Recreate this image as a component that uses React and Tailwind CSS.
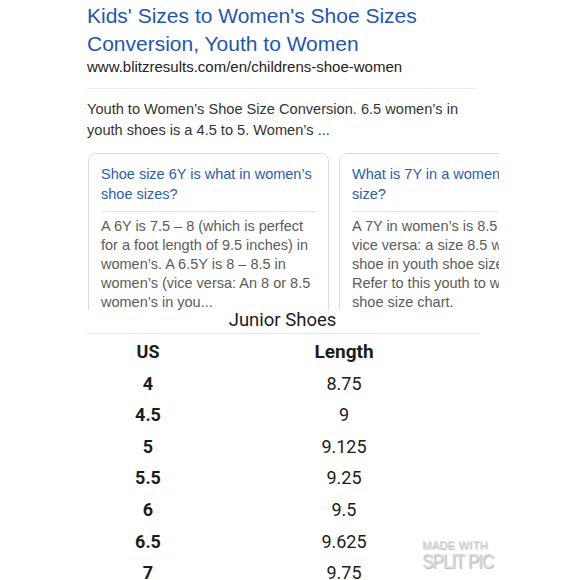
import React from "react";

const rows = [
  ["4", "8.75"],
  ["4.5", "9"],
  ["5", "9.125"],
  ["5.5", "9.25"],
  ["6", "9.5"],
  ["6.5", "9.625"],
  ["7", "9.75"],
];

const Card = ({ title, body }) => (
  <div className="shrink-0 w-[241px] h-[200px] rounded-lg border border-[#dadce0] px-3 pt-[10px]">
    <p className="text-[14.5px] leading-[20px] text-[#2a5db0] whitespace-pre-line">{title}</p>
    <div className="h-px bg-[#e3e3e3] mt-[7px] mb-[5px]" />
    <p className="text-[14.5px] leading-[19px] text-[#5b5b5b] whitespace-pre-line">{body}</p>
  </div>
);

export default function App() {
  return (
    <div className="relative w-[580px] h-[580px] overflow-hidden bg-white font-['Liberation_Sans',Arial,sans-serif]">
      {/* SEARCH RESULT */}
      <div className="pl-[87px] pt-[2px]">
        <h1 className="text-[21px] leading-[27.5px] text-[#1f56b3]">
          Kids' Sizes to Women's Shoe Sizes
          <br />
          Conversion, Youth to Women
        </h1>
        <p className="text-[15px] leading-[20px] text-[#222]">
          www.blitzresults.com/en/childrens-shoe-women
        </p>
        <div className="mt-[11px] w-[391px] h-px bg-[#ececec]" />
        <p className="mt-[10px] text-[14.6px] leading-[21px] text-[#333]">
          Youth to Women’s Shoe Size Conversion. 6.5 women’s in
          <br />
          youth shoes is a 4.5 to 5. Women’s ...
        </p>

        {/* CARDS */}
        <div className="mt-[12px] h-[157px] w-[412px] overflow-hidden flex gap-[10px] pl-px">
          <Card
            title={"Shoe size 6Y is what in women’s\nshoe sizes?"}
            body={"A 6Y is 7.5 – 8 (which is perfect\nfor a foot length of 9.5 inches) in\nwomen’s. A 6.5Y is 8 – 8.5 in\nwomen’s (vice versa: An 8 or 8.5\nwomen’s in you..."}
          />
          <Card
            title={"What is 7Y in a women’s shoe\nsize?"}
            body={"A 7Y in women’s is 8.5 (and\nvice versa: a size 8.5 women’s\nshoe in youth shoe size is 7Y).\nRefer to this youth to women’s\nshoe size chart."}
          />
        </div>
      </div>

      {/* JUNIOR SHOES TABLE */}
      <div className="pl-[87px] font-['Roboto',sans-serif] text-[#1c1c1c]">
        <div className="w-[391px] border-b border-[#e4e4e4] text-center text-[18.5px] leading-[21px] pb-[2px]">
          Junior Shoes
        </div>
        <div className="mt-[2px] grid grid-cols-[122px_270px] text-[18px] leading-[31.6px] text-center">
          <div className="font-bold">US</div>
          <div className="font-bold text-[19px]">Length</div>
          {rows.map(([us, len]) => (
            <React.Fragment key={us}>
              <div className="font-bold">{us}</div>
              <div>{len}</div>
            </React.Fragment>
          ))}
        </div>
      </div>

      {/* WATERMARK */}
      <div className="absolute left-[422px] top-[540px] text-[#dadada] font-['Liberation_Sans',sans-serif] leading-none [text-shadow:1px_1px_1px_rgba(0,0,0,0.3)]">
        <div className="text-[11px] tracking-[0.3px]">MADE WITH</div>
        <div className="text-[17px] tracking-[-1px] mt-[1px] origin-top-left scale-y-[1.15]">SPLIT PIC</div>
      </div>
    </div>
  );
}
